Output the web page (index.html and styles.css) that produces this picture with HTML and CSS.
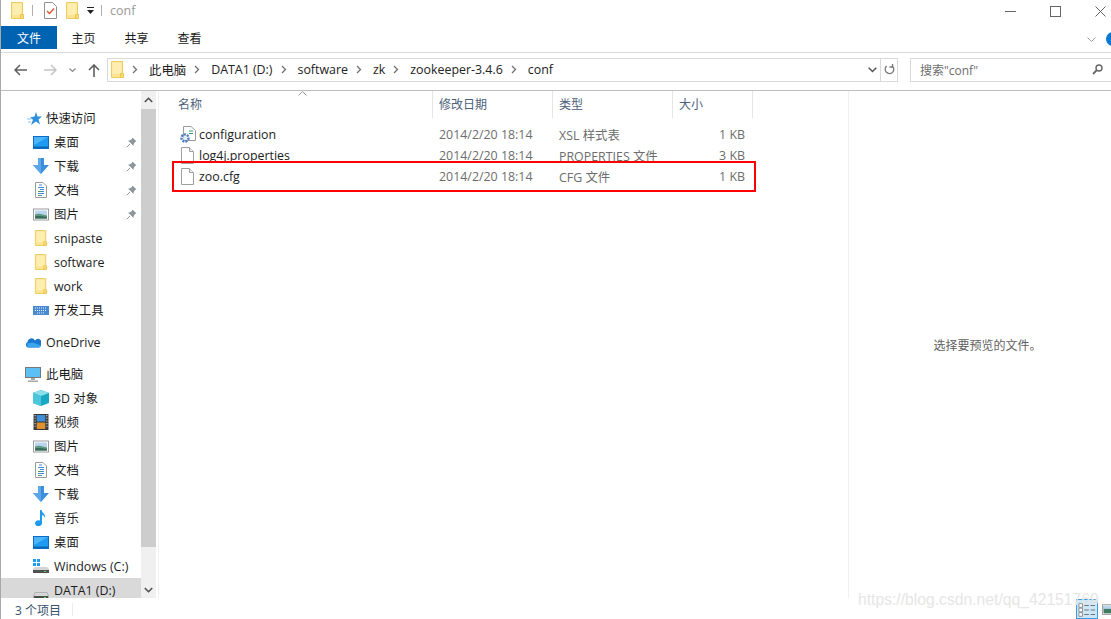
FILE: index.html
```html
<!DOCTYPE html>
<html lang="zh">
<head>
<meta charset="utf-8">
<title>conf</title>
<link rel="stylesheet" href="styles.css">
</head>
<body>
<svg class="defs" width="0" height="0" aria-hidden="true">
  <symbol id="folder" viewBox="0 0 13 17"><path d="M.5 .5H11.5V16.5H.5Z" fill="#fde58f" stroke="#eccb62"/><path d="M1.500 1.500H10.500V13H1.500Z" fill="#ffeeb0"/><path d="M9.500 12.500H12.500V16.500H9.500Z" fill="#fbdc7c" stroke="#e9c453"/></symbol>
  <symbol id="desktop" viewBox="0 0 16 13"><rect x=".5" y=".5" width="15" height="12" fill="#1e9bf0" stroke="#0a6cc4"/><path d="M1 1H15L1 9Z" fill="#4db5f7"/><path d="M1 10.500H15V12H1Z" fill="#0b68b8"/></symbol>
  <symbol id="down" viewBox="0 0 16 16"><path d="M5 0H11V7H16L8 16 0 7H5Z" fill="#3d8fdc"/><path d="M5 0H8V16L0 7H5Z" fill="#5aa7ea"/></symbol>
  <symbol id="doc" viewBox="0 0 12 16"><path d="M.5 .5H8L11.500 4V15.500H.5Z" fill="#fff" stroke="#9a9a9a"/><path d="M4 3H7M3 5.500H9M5 7.500H9M3 9.500H9M3 11.500H9M3 13.500H7" stroke="#3b8ad4" fill="none"/><path d="M3 9.500H6M3 13.500H5" stroke="#6a9a4c" fill="none"/></symbol>
  <symbol id="pic" viewBox="0 0 16 12"><rect x=".5" y=".5" width="15" height="11" fill="#fff" stroke="#9c9c9c"/><path d="M2 2H14V10H2Z" fill="#b9d6ee"/><path d="M2 6C6 4 10 6 14 7V10H2Z" fill="#5f9a80"/><path d="M2 8C6 7 10 8 14 8.500V10H2Z" fill="#3a6b56"/></symbol>
  <symbol id="pin" viewBox="0 0 11 11"><path d="M6.500 .5 10.500 4.500 9 5 7.500 7.500 7.500 9 2 3.500 3.500 3.500 6 2Z" fill="#8f979e"/><path d="M4 7 .8 10.200" stroke="#8f979e" fill="none"/></symbol>
  <symbol id="page" viewBox="0 0 13 17"><path d="M.5 .5H8.500L12.500 4.500V16.500H.5Z" fill="#fff" stroke="#a0a0a0"/><path d="M8.500 .5V4.500H12.500" fill="#f0f0f0" stroke="#a0a0a0"/></symbol>
  <symbol id="drive" viewBox="0 0 16 8"><path d="M2 .5H14L15.500 4V7.500H.5V4Z" fill="#d8d8d8" stroke="#b0b0b0"/><rect x="1" y="4" width="14" height="3.500" fill="#4c4c4c"/><rect x="11" y="5" width="2" height="1.500" fill="#45e05a"/></symbol>
  <symbol id="chev" viewBox="0 0 6 9"><path d="M1 1 4.500 4.500 1 8" fill="none" stroke="#6f6f6f" stroke-width="1.300"/></symbol>
</svg>

<div class="window">
  <header class="titlebar">
    <svg class="ico-q"><use href="#folder"/></svg>
    <span class="qsep"></span>
    <svg class="ico-q ico-check" viewBox="0 0 13 17"><path d="M.5 .5H8.500L12.500 4.500V16.500H.5Z" fill="#fff" stroke="#909090"/><path d="M3 9 5.500 11.500 10 6.500" fill="none" stroke="#e0562b" stroke-width="1.300"/></svg>
    <svg class="ico-q ico-f2"><use href="#folder"/></svg>
    <svg class="ico-drop" viewBox="0 0 7 7"><path d="M0 .5H7" stroke="#222" fill="none"/><path d="M0 3H7L3.500 7Z" fill="#222"/></svg>
    <span class="qsep qsep-2"></span>
    <span class="wintitle">conf</span>
    <div class="winctl">
      <svg class="ctl" viewBox="0 0 11 11"><path d="M0 5.500H11" stroke="#666" fill="none"/></svg>
      <svg class="ctl" viewBox="0 0 11 11"><rect x=".5" y=".5" width="10" height="10" fill="none" stroke="#666"/></svg>
      <svg class="ctl" viewBox="0 0 11 11"><path d="M.5 .5 10.500 10.500M10.500 .5 .5 10.500" stroke="#666" fill="none"/></svg>
    </div>
  </header>

  <nav class="ribbon">
    <span class="tab tab-file">文件</span>
    <span class="tab">主页</span>
    <span class="tab">共享</span>
    <span class="tab">查看</span>
    <svg class="ribbon-exp" viewBox="0 0 9 5"><path d="M.5 .5 4.500 4.500 8.500 .5" stroke="#9a9a9a" fill="none"/></svg>
    <span class="help"></span>
  </nav>

  <div class="addressrow">
    <svg class="navbtn" viewBox="0 0 13 12"><path d="M13 6H1M6 1 1 6 6 11" fill="none" stroke="#5f5f5f" stroke-width="1.500"/></svg>
    <svg class="navbtn navbtn-fwd" viewBox="0 0 13 12"><path d="M0 6H12M7 1 12 6 7 11" fill="none" stroke="#c4c4c4" stroke-width="1.500"/></svg>
    <svg class="navdrop" viewBox="0 0 7 5"><path d="M.5 .5 3.500 3.500 6.500 .5" fill="none" stroke="#8a8a8a" stroke-width="1.200"/></svg>
    <svg class="navbtn navbtn-up" viewBox="0 0 12 13"><path d="M6 13V1M1 6 6 1 11 6" fill="none" stroke="#5f5f5f" stroke-width="1.600"/></svg>
    <div class="addressbox">
      <svg class="crumb-folder"><use href="#folder"/></svg>
      <svg class="chev"><use href="#chev"/></svg><span>此电脑</span>
      <svg class="chev"><use href="#chev"/></svg><span>DATA1 (D:)</span>
      <svg class="chev"><use href="#chev"/></svg><span>software</span>
      <svg class="chev"><use href="#chev"/></svg><span>zk</span>
      <svg class="chev"><use href="#chev"/></svg><span>zookeeper-3.4.6</span>
      <svg class="chev"><use href="#chev"/></svg><span>conf</span>
      <svg class="addr-drop" viewBox="0 0 9 6"><path d="M.7 .7 4.500 4.500 8.300 .7" fill="none" stroke="#555" stroke-width="1.500"/></svg>
      <span class="addr-refresh"><svg class="refresh" viewBox="0 0 11 11"><path d="M3 1.800A4.300 4.300 0 1 0 8.300 2M2.500 0V3H5.500" fill="none" stroke="#777" stroke-width="1.300" transform="translate(11 0) scale(-1 1)"/></svg></span>
    </div>
    <div class="searchbox">
      <span>搜索"conf"</span>
      <svg class="mag" viewBox="0 0 11 11"><circle cx="7" cy="4" r="3" fill="none" stroke="#666" stroke-width="1.400"/><path d="M4.800 6.200 1 10" stroke="#666" stroke-width="1.800" fill="none"/></svg>
    </div>
  </div>

  <main class="body">
    <aside class="sidebar">
      <ul class="tree">
        <li class="node root"><svg class="ic ic-star" viewBox="0 0 15 13"><path d="M9 0 10.500 4.500H15L11.500 7.500 13 12.500 9 9.500 4 13 6 7.800 3 5.500 7.500 4.500Z" fill="#2f8fdc"/><path d="M0 7H4M1 10H4" stroke="#8cc4ee" fill="none"/></svg>快速访问</li>
        <li class="node"><svg class="ic"><use href="#desktop"/></svg>桌面<svg class="pin"><use href="#pin"/></svg></li>
        <li class="node"><svg class="ic ic-tall"><use href="#down"/></svg>下载<svg class="pin"><use href="#pin"/></svg></li>
        <li class="node"><svg class="ic ic-tall"><use href="#doc"/></svg>文档<svg class="pin"><use href="#pin"/></svg></li>
        <li class="node"><svg class="ic"><use href="#pic"/></svg>图片<svg class="pin"><use href="#pin"/></svg></li>
        <li class="node"><svg class="ic ic-tall"><use href="#folder"/></svg>snipaste</li>
        <li class="node"><svg class="ic ic-tall"><use href="#folder"/></svg>software</li>
        <li class="node"><svg class="ic ic-tall"><use href="#folder"/></svg>work</li>
        <li class="node"><svg class="ic" viewBox="0 0 16 9"><rect width="16" height="9" fill="#4a8ad0"/><path d="M2 2H14M2 4.500H14M4 7H12" stroke="#e8f2fb" stroke-dasharray="1 1" fill="none"/></svg>开发工具</li>
        <li class="node root group"><svg class="ic" viewBox="0 0 16 10"><path d="M3 10A3 3 0 0 1 2.500 4.500 4 4 0 0 1 10 3 3.500 3.500 0 0 1 16 8 3 3 0 0 1 14 10Z" fill="#1a78d0"/><path d="M3 10H14A3 3 0 0 0 16 8L8 5 2 6Z" fill="#39a5ee"/></svg>OneDrive</li>
        <li class="node root group"><svg class="ic ic-pc" viewBox="0 0 16 15"><rect x=".5" y=".5" width="15" height="10" fill="#5dc0f5" stroke="#777"/><path d="M6 11H10V13H6ZM3 13.500H13V15H3Z" fill="#a8a8a8"/></svg>此电脑</li>
        <li class="node"><svg class="ic ic-tall" viewBox="0 0 16 16"><path d="M8 0 16 3V13L8 16 0 13V3Z" fill="#18a8c4"/><path d="M8 0 16 3 8 6 0 3Z" fill="#8be0ea"/><path d="M0 3 8 6V16L0 13Z" fill="#4cc6da"/></svg>3D 对象</li>
        <li class="node"><svg class="ic ic-tall" viewBox="0 0 14 15"><rect width="14" height="15" fill="#3a3a3a"/><rect x="3" y="1" width="8" height="6" fill="#3f8fd8"/><rect x="3" y="8" width="8" height="6" fill="#e0922e"/><path d="M1 1.500H2M1 4H2M1 6.500H2M1 9H2M1 11.500H2M12 1.500H13M12 4H13M12 6.500H13M12 9H13M12 11.500H13" stroke="#ddd" fill="none"/></svg>视频</li>
        <li class="node"><svg class="ic"><use href="#pic"/></svg>图片</li>
        <li class="node"><svg class="ic ic-tall"><use href="#doc"/></svg>文档</li>
        <li class="node"><svg class="ic ic-tall"><use href="#down"/></svg>下载</li>
        <li class="node"><svg class="ic ic-tall" viewBox="0 0 12 16"><path d="M5 0H6.500C7 3 11 4 10 8 9.500 6 8 5 7 5V13A3.500 3 0 1 1 5 10.500Z" fill="#1e9bf0"/></svg>音乐</li>
        <li class="node"><svg class="ic"><use href="#desktop"/></svg>桌面</li>
        <li class="node"><svg class="ic ic-tall" viewBox="0 0 16 14"><path d="M0 0H3V3H0ZM4 0H7V3H4ZM0 4H3V7H0ZM4 4H7V7H4Z" fill="#1e9bf0"/><path d="M2 8H14L16 10V14H0V10Z" fill="#d4d4d4"/><rect y="11" width="16" height="3" fill="#505050"/><rect x="11" y="12" width="2" height="1" fill="#45e05a"/></svg>Windows (C:)</li>
        <li class="node selected"><svg class="ic ic-drive"><use href="#drive"/></svg>DATA1 (D:)</li>
      </ul>
    </aside>
    <div class="scrollbar">
      <svg class="sb-arrow" viewBox="0 0 9 6"><path d="M.8 5 4.500 1.300 8.200 5" fill="none" stroke="#505050" stroke-width="1.600"/></svg>
      <div class="sb-thumb"></div>
      <svg class="sb-arrow sb-down" viewBox="0 0 9 6"><path d="M.8 1 4.500 4.700 8.200 1" fill="none" stroke="#505050" stroke-width="1.600"/></svg>
    </div>

    <section class="files">
      <svg class="sortcaret" viewBox="0 0 9 5"><path d="M.5 4.500 4.500 .5 8.500 4.500" fill="none" stroke="#9a9a9a"/></svg>
      <div class="row head">
        <span class="c-name">名称</span><span class="c-date">修改日期</span><span class="c-type">类型</span><span class="c-size">大小</span>
      </div>
      <div class="row"><span class="c-name"><svg class="fi" viewBox="0 0 16 17"><path d="M3.500 .5H11L15.500 4.500V14.500H3.500Z" fill="#fff" stroke="#9a9a9a"/><path d="M9 5H13M9 7.500H13" stroke="#2a9d6c" fill="none"/><circle cx="5" cy="12" r="3.500" fill="none" stroke="#4b7fbf" stroke-width="2.500" stroke-dasharray="2 1"/><circle cx="5" cy="12" r="2" fill="#dfe9f5"/></svg>configuration</span><span class="c-date">2014/2/20 18:14</span><span class="c-type">XSL 样式表</span><span class="c-size">1 KB</span></div>
      <div class="row"><span class="c-name"><svg class="fi fi-page"><use href="#page"/></svg>log4j.properties</span><span class="c-date">2014/2/20 18:14</span><span class="c-type">PROPERTIES 文件</span><span class="c-size">3 KB</span></div>
      <div class="row"><span class="c-name"><svg class="fi fi-page"><use href="#page"/></svg>zoo.cfg</span><span class="c-date">2014/2/20 18:14</span><span class="c-type">CFG 文件</span><span class="c-size">1 KB</span></div>
      <div class="redbox"></div>
    </section>

    <section class="preview">选择要预览的文件。</section>
  </main>

  <footer class="status">
    <span class="count">3 个项目</span>
    <span class="status-sep"></span>
    <span class="viewbtn viewbtn-on"><svg viewBox="0 0 20 15"><path d="M1 .5H5V4.500H1ZM1 5.500H5V9.500H1ZM1 10.500H5V14.500H1Z" fill="#fff" stroke="#888"/><path d="M7 2.500H12M14 2.500H19M7 7.500H12M14 7.500H19M7 12.500H12M14 12.500H19" stroke="#666" fill="none"/></svg></span>
    <span class="viewbtn"><svg viewBox="0 0 12 15"><rect x=".5" y=".5" width="14" height="13" fill="#fff" stroke="#888"/><path d="M2 2H13V12H2Z" fill="#3f7a62"/><path d="M2 2H13V6H2Z" fill="#b9d6ee"/></svg></span>
  </footer>
  <div class="watermark">https://blog.csdn.net/qq_42151769</div>
</div>
</body>
</html>
```
FILE: styles.css
```css
* { box-sizing: border-box; }
html, body { margin: 0; padding: 0; }
body {
  width: 1111px;
  height: 619px;
  overflow: hidden;
  background: #fff;
  font-family: "Open Sans", "Noto Sans CJK SC", sans-serif;
  font-size: 12px;
  color: #1a1a1a;
}
.defs { position: absolute; }
svg { display: block; flex: none; }

.window {
  position: relative;
  height: 619px;
  display: flex;
  flex-direction: column;
  border-left: 1px solid #a8a8a8;
  overflow: hidden;
}

/* Title bar */
.titlebar {
  height: 26px;
  display: flex;
  align-items: center;
  padding: 0 0 5px 10px;
}
.ico-q { width: 13px; height: 17px; }
.qsep { width: 1px; height: 11px; background: #b0b0b0; margin-left: 8px; }
.ico-check { margin-left: 11px; }
.ico-f2 { margin-left: 9px; }
.ico-drop { width: 7px; height: 7px; margin-left: 8px; }
.qsep-2 { margin-left: 7px; }
.wintitle { margin-left: 8px; color: #9a9a9a; font-size: 12.5px; }
.winctl { margin-left: auto; display: flex; gap: 34px; padding-right: 5px; margin-top: 2px; }
.ctl { width: 11px; height: 11px; }

/* Ribbon */
.ribbon {
  height: 27px;
  display: flex;
  align-items: flex-start;
  border-bottom: 1px solid #dadbdc;
}
.tab { width: 53px; height: 23px; line-height: 25px; text-align: center; font-size: 12px; }
.tab-file { width: 56px; background: #0063b1; color: #fff; }
.ribbon-exp { width: 9px; height: 5px; margin: 11px 0 0 auto; }
.help { width: 14px; height: 14px; margin: 6px -9px 0 10px; border-radius: 50%; background: #0a78d4; }

/* Address row */
.addressrow {
  height: 38px;
  display: flex;
  align-items: center;
  padding: 0 0 3px 13px;
  border-bottom: 1px solid #bdbdbd;
}
.navbtn { width: 13px; height: 12px; }
.navbtn-fwd { margin-left: 17px; }
.navdrop { width: 7px; height: 5px; margin-left: 12px; }
.navbtn-up { width: 12px; height: 13px; margin-left: 12px; }
.addressbox {
  width: 791px;
  height: 24px;
  margin-left: 7px;
  display: flex;
  align-items: center;
  padding: 0 0 1px 3px;
  border: 1px solid #d9d9d9;
  font-size: 12.400px;
  color: #222;
  white-space: nowrap;
}
.crumb-folder { width: 13px; height: 17px; }
.chev { width: 6px; height: 9px; margin: 0 11px 0 8px; }
.addr-drop { width: 9px; height: 6px; margin-left: auto; }
.addr-refresh { width: 17px; height: 22px; margin-left: 3px; border-left: 1px solid #d9d9d9; display: flex; align-items: center; justify-content: center; }
.refresh { width: 11px; height: 11px; }
.searchbox {
  flex: 1;
  height: 24px;
  margin-left: 12px;
  display: flex;
  align-items: center;
  justify-content: space-between;
  padding: 0 8px 1px 9px;
  border: 1px solid #d9d9d9;
  border-right: 0;
  color: #6d6d6d;
}
.mag { width: 11px; height: 11px; }

/* Main body */
.body { flex: 1; display: flex; min-height: 0; }
.sidebar { width: 140px; overflow: hidden; padding-top: 15px; font-size: 12.400px; }
.tree { list-style: none; margin: 0; padding: 0; }
.node {
  height: 24px;
  display: flex;
  align-items: center;
  padding-left: 32px;
  color: #1c1c1c;
  white-space: nowrap;
}
.node.root { padding-left: 26px; }
.node.group { margin-top: 8px; }
.ic { width: 16px; height: 13px; margin-right: 5px; }
.root .ic { margin-left: -2px; }
.root .ic-star { width: 15px; height: 13px; margin-left: 0; margin-right: 4px; }
.ic-pc { height: 15px; }
.ic-tall { height: 16px; }
.ic-drive { height: 8px; margin-top: 12px; }
.pin { width: 11px; height: 11px; margin-left: auto; margin-right: 4px; }
.selected { background: #d9d9d9; }

.scrollbar {
  width: 15px;
  background: #f0f0f0;
  display: flex;
  flex-direction: column;
  align-items: center;
}
.sb-arrow { width: 9px; height: 6px; margin: 6px 0; }
.sb-thumb { width: 15px; height: 438px; background: #cdcdcd; }
.sb-down { margin-top: auto; margin-bottom: 5px; }

.files {
  position: relative;
  width: 690px;
  margin-left: 2px;
  border-left: 1px solid #f0f0f0;
}
.sortcaret { position: absolute; left: 139px; top: 0; width: 9px; height: 5px; }
.row {
  height: 21px;
  display: flex;
  align-items: center;
  color: #6d6d6d;
  white-space: nowrap;
  font-size: 12.400px;
}
.head { height: 27px; margin-bottom: 6px; color: #4c607a; font-size: 12px; }
.head span { height: 100%; display: flex; align-items: center; padding-bottom: 1px; border-right: 1px solid #e5e5e5; }
.c-name { width: 274px; padding-left: 19px; display: flex; align-items: center; color: #1c1c1c; }
.fi { width: 16px; height: 17px; margin-right: 3px; margin-left: 2px; }
.fi-page { width: 13px; height: 17px; margin-right: 5px; margin-left: 3px; }
.c-date { width: 120px; padding-left: 6px; }
.c-type { width: 120px; padding-left: 6px; }
.c-size { width: 80px; padding-right: 8px; text-align: right; }
.head .c-name { color: #4c607a; }
.head .c-size { padding-left: 6px; padding-right: 0; }
.redbox {
  position: absolute;
  left: 13px;
  top: 70px;
  width: 584px;
  height: 31px;
  border: 2px solid #f00;
}

.preview {
  flex: 1;
  padding-left: 15px;
  border-left: 1px solid #f0f0f0;
  display: flex;
  align-items: center;
  justify-content: center;
  color: #5f5f5f;
}

/* Status */
.status {
  height: 21px;
  display: flex;
  align-items: center;
  padding-left: 14px;
  color: #38526f;
}
.count { width: 57px; margin-top: 2px; }
.status-sep { width: 1px; height: 13px; margin-top: 2px; background: #ececec; }
.viewbtn { width: 22px; height: 20px; align-self: flex-end; padding: 3px 1px 0; border: 1px solid #9a9a9a; }
.viewbtn-on { margin-left: auto; background: #cce8f8; border-color: #3c9be0; }
.viewbtn svg { width: 18px; height: 14px; }
.viewbtn:last-child { width: 9px; margin-left: 4px; border: 0; padding: 4px 0 0; }
.viewbtn:last-child svg { width: 9px; height: 14px; }

.watermark {
  position: absolute;
  left: 857px;
  top: 591px;
  font-family: "Liberation Sans", sans-serif;
  font-size: 15.700px;
  color: #e6e6e6;
  white-space: nowrap;
}
```
